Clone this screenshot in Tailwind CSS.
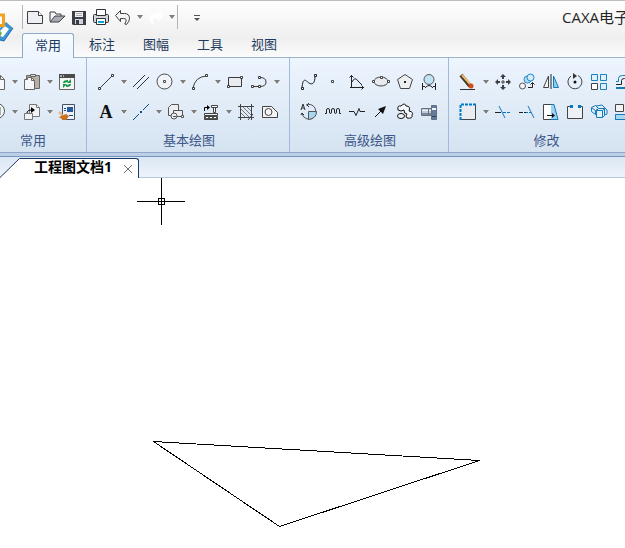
<!DOCTYPE html>
<html lang="zh-CN">
<head>
    <meta charset="UTF-8">
    <meta name="viewport" content="width=device-width, initial-scale=1.0">
    <title>CAXA电子</title>
    <script src="https://cdn.jsdelivr.net/npm/@tailwindcss/browser@4"></script>
</head>
<body class="flex h-screen flex-col overflow-hidden bg-white font-['Open_Sans','Noto_Sans_CJK_SC',sans-serif] text-[13px]">
    <!-- Shared drop-down arrow -->
    <svg class="hidden">
        <symbol id="drop" viewBox="0 0 11 24">
            <path d="M3 11h6l-3 4z" fill="#fff"/>
            <path d="M3 10h6l-3 4z" fill="#7d7d7d"/>
        </symbol>
    </svg>

    <header class="relative shrink-0 border-t border-[#bdbdbd] bg-linear-to-b from-white via-[#efefef] via-65% to-[#fcfcfc]">
        <!-- Application logo -->
        <svg class="absolute left-0 top-3 h-8 w-4" viewBox="0 0 16 32" aria-hidden="true">
            <path d="M6 9l7 6-9 13-4-1V15z" fill="#3e93d0"/>
            <path d="M13 15L4 28l-4-1" fill="none" stroke="#1c6cab"/>
            <path d="M5 13l4 3-6 8-3-1v-5z" fill="#fff"/>
            <path d="M0 18l2 2-2 4z" fill="#6ab33e"/>
            <path d="M0 2h3.500v10.500H0" fill="none" stroke="#f2a21d" stroke-width="3"/>
            <path d="M0 4h2v7H0z" fill="#fff"/>
        </svg>

        <div class="flex h-8 items-center pl-[22px]">
            <div class="flex items-center border-x border-[#b4b4b4] px-px">
                <button class="h-[15px] w-[22px]" aria-label="新建">
                    <svg class="-my-1 h-[22px] w-[22px]" viewBox="0 0 22 22" fill="none" stroke="#3c3e43">
                        <path d="M3.500 5.500h11l4 4v8h-15z" fill="#eeeff2"/><path d="M14.500 5.500v4h4" fill="#fff"/>
                    </svg>
                </button>
                <button class="h-[15px] w-[22px]" aria-label="打开">
                    <svg class="-my-1 h-[22px] w-[22px]" viewBox="0 0 22 22" fill="none" stroke="#3c3e43">
                        <path d="M4 15V6h5l1 2h5v2" fill="#f5f5f7"/><path d="M4 16l5-6h10l-6 6z" fill="#a9adb3"/>
                    </svg>
                </button>
                <button class="h-[15px] w-[22px]" aria-label="保存">
                    <svg class="-my-1 h-[22px] w-[22px]" viewBox="0 0 22 22">
                        <path d="M4 5h14v14H5l-1-1z" fill="#3a3d45"/><path d="M7 6h8v5H7z" fill="#f4f4f4"/><path d="M8 7.500h6M8 9.500h6" stroke="#aaa"/><path d="M7 13h8v5H7z" fill="#cfd2d8"/><path d="M8 14h3v4H8z" fill="#3a3d45"/>
                    </svg>
                </button>
                <button class="h-[15px] w-[22px]" aria-label="打印">
                    <svg class="-my-1 h-[22px] w-[22px]" viewBox="0 0 22 22" fill="none" stroke="#303238">
                        <rect x="3.500" y="8.500" width="15" height="8" rx="1" fill="#d4d6da"/><path d="M6.500 9.500v-6h9v6z" fill="#fff"/><path d="M6.500 12.500h9v6h-9z" fill="#fff"/><path d="M8 16h6" stroke="#00a7d9" stroke-width="2"/>
                    </svg>
                </button>
                <button class="h-[15px] w-[22px]" aria-label="撤销">
                    <svg class="-my-1 h-[22px] w-[22px]" viewBox="0 0 22 22" fill="#f4f4f4" stroke="#3c3e43">
                        <path d="M3.500 9.500l5-5v3h4q5 0 5 5 0 3-3 6-3 0-1-2 2-4-2-4h-3v3z"/>
                    </svg>
                </button>
                <button class="h-6 w-[11px]" aria-label="撤销列表"><svg class="h-6 w-[11px]"><use href="#drop"/></svg></button>
                <button class="h-[15px] w-[22px]" aria-label="恢复" disabled>
                    <svg class="-my-1 h-[22px] w-[22px]" viewBox="0 0 22 22" fill="#fff">
                        <path d="M18.500 9.500l-5-5v3h-4q-5 0-5 5 0 3 3 6 3 0 1-2-2-4 2-4h3v3z"/>
                    </svg>
                </button>
                <button class="h-6 w-[9px]" aria-label="恢复列表"><svg class="-ml-px h-6 w-[11px]"><use href="#drop"/></svg></button>
            </div>
            <button class="ml-3 h-6 w-4" aria-label="自定义快速启动工具栏">
                <svg class="h-6 w-4" viewBox="0 0 16 24"><path d="M4 10.500h6" stroke="#555"/><path d="M4 13h6l-3 3z" fill="#555"/></svg>
            </button>
            <h1 class="ml-auto w-[63px] overflow-hidden whitespace-nowrap text-[15px] text-[#262626]">CAXA电子</h1>
        </div>

        <nav class="flex gap-0.5 border-b border-[#9db3cd] pl-[22px] text-[#1e3a60]" role="tablist">
            <button class="-mb-px h-[25px] w-[52px] rounded-t-[3px] border border-b-0 border-[#8ea9ca] bg-linear-to-b from-[#f7fbff] to-[#edf5fe]" role="tab" aria-selected="true">常用</button>
            <button class="h-6 w-[52px]" role="tab">标注</button>
            <button class="h-6 w-[52px]" role="tab">图幅</button>
            <button class="h-6 w-[52px]" role="tab">工具</button>
            <button class="h-6 w-[52px]" role="tab">视图</button>
        </nav>
    </header>

    <div class="flex shrink-0 overflow-hidden border-b border-[#8ea7cb] bg-linear-to-b from-[#edf5fe] to-[#d5e3f1] text-[#3c5688]">
        <!-- 常用 -->
        <section class="-ml-[22px] flex shrink-0 flex-col items-center border-r border-[#a3b9d9] px-[7px] pt-[9px]">
            <div class="flex h-[30px] items-center">
                <button class="w-6" aria-label="复制">
                    <svg class="size-6" viewBox="0 0 24 24" fill="#f7f7f7" stroke="#666"><path d="M8.500 5.500h7l4 4v10h-11z"/><path d="M15.500 5.500v4h4" fill="none"/></svg>
                </button>
                <button class="w-[11px]" aria-label="复制选项"><svg class="h-6 w-[11px]"><use href="#drop"/></svg></button>
                <button class="w-6" aria-label="粘贴">
                    <svg class="size-6" viewBox="0 0 24 24" stroke="#666"><path d="M6.500 5.500h13v13h-13z" fill="#b8b0a5"/><path d="M10.500 4.500h5v2h-5z" fill="#ddd"/><path d="M4.500 9.500h3v-2h4l3 3v9h-10z" fill="#f6f7fa"/><path d="M11.500 7.500v3h3" fill="none"/></svg>
                </button>
                <button class="w-[11px]" aria-label="粘贴选项"><svg class="h-6 w-[11px]"><use href="#drop"/></svg></button>
                <button class="w-6" aria-label="刷新">
                    <svg class="size-6" viewBox="0 0 24 24" fill="none"><path d="M4.500 5.500h15v14h-15z" fill="#f5f5f5" stroke="#666"/><path d="M4 4h16v4H4z" fill="#4b4b4b"/><path d="M5 6h2M8 6h1" stroke="#fff"/><path d="M9 13q0-2 4-2M15 14q0 2-4 2" stroke="#139a48" stroke-width="2"/><path d="M12 13h4V9zM12 14H8v4z" fill="#139a48"/></svg>
                </button>
            </div>
            <div class="flex h-[30px] items-center">
                <button class="w-6" aria-label="图层">
                    <svg class="size-6" viewBox="0 0 24 24" fill="#f7f7f7" stroke="#555"><circle cx="12" cy="11" r="7.500"/><path d="M9 7h6v8H9z" fill="none" stroke="#387b65"/></svg>
                </button>
                <button class="w-[11px]" aria-label="图层选项"><svg class="h-6 w-[11px]"><use href="#drop"/></svg></button>
                <button class="w-6" aria-label="插入块">
                    <svg class="size-6" viewBox="0 0 24 24" fill="#f2f3f5" stroke="#777"><path d="M9.500 4.500h7l3 3v9h-10z"/><path d="M16.500 4.500v3h3M4.500 13.500h8v6h-8z"/><path d="M7 13q0-3 5-3" fill="none" stroke="#000"/><path d="M11 7l4 3-4 3z" fill="#000" stroke="none"/></svg>
                </button>
                <button class="w-[11px]" aria-label="插入块选项"><svg class="h-6 w-[11px]"><use href="#drop"/></svg></button>
                <button class="w-6" aria-label="特性匹配">
                    <svg class="size-6" viewBox="0 0 24 24"><path d="M7.500 4.500h12v15h-12z" fill="#eef2f8" stroke="#445263"/><path d="M12 7h6v5h-6z" fill="#24599f"/><path d="M9 8.500h2M9 10.500h2M14 15.500h4" stroke="#1d4d8b"/><path d="M4 12l4 4" stroke="#e6b47a" stroke-width="2"/><path d="M6 16l5-2 3 2-3 4H8l-4-3z" fill="#cc7120"/></svg>
                </button>
            </div>
            <h2 class="h-[25px] pl-0.5 leading-[27px]">常用</h2>
        </section>

        <!-- 基本绘图 -->
        <section class="flex shrink-0 flex-col items-center border-r border-[#a3b9d9] px-[7px] pt-[9px]">
            <div class="flex h-[30px] items-center">
                <button class="w-6" aria-label="直线">
                    <svg class="size-6" viewBox="0 0 24 24" fill="#fff" stroke="#3b3b3b"><path d="M6 18L18 6"/><path d="M4.500 17.500h2v2h-2zM17.500 4.500h2v2h-2z"/></svg>
                </button>
                <button class="w-[11px]" aria-label="直线选项"><svg class="h-6 w-[11px]"><use href="#drop"/></svg></button>
                <button class="w-6" aria-label="平行线">
                    <svg class="size-6" viewBox="0 0 24 24" stroke="#2f2f2f"><path d="M4 17L16 5M8 19L20 7"/></svg>
                </button>
                <button class="w-6" aria-label="圆">
                    <svg class="size-6" viewBox="0 0 24 24" fill="#f1f3f6" stroke="#4b4b4b"><circle cx="11.500" cy="11.500" r="7.500"/><path d="M10.500 10.500h2v2h-2z"/></svg>
                </button>
                <button class="w-[11px]" aria-label="圆选项"><svg class="h-6 w-[11px]"><use href="#drop"/></svg></button>
                <button class="w-6" aria-label="圆弧">
                    <svg class="size-6" viewBox="0 0 24 24" fill="none" stroke="#3b3b3b"><path d="M5 18Q7 7 18 6"/><path d="M4.500 17.500h2v2h-2zM17.500 4.500h2v2h-2z" fill="#fff"/></svg>
                </button>
                <button class="w-[11px]" aria-label="圆弧选项"><svg class="h-6 w-[11px]"><use href="#drop"/></svg></button>
                <button class="w-6" aria-label="矩形">
                    <svg class="size-6" viewBox="0 0 24 24" fill="#e9ebef" stroke="#3b3b3b"><path d="M5.500 7.500h13v9h-13z"/><path d="M4.500 15.500h2v2h-2zM17.500 6.500h2v2h-2z" fill="#fff"/></svg>
                </button>
                <button class="w-6" aria-label="多段线">
                    <svg class="size-6" viewBox="0 0 24 24" fill="none" stroke="#3b3b3b"><path d="M5 16.500h7M13 7.500q6 0 6 4.500t-6 4.500"/><path d="M4.500 15.500h2v2h-2zM11.500 15.500h2v2h-2zM11.500 6.500h2v2h-2z" fill="#fff"/></svg>
                </button>
                <button class="w-[11px]" aria-label="多段线选项"><svg class="h-6 w-[11px]"><use href="#drop"/></svg></button>
            </div>
            <div class="flex h-[30px] items-center">
                <button class="w-6 font-['Liberation_Serif',serif] text-[18px] font-bold leading-6 text-[#111]" aria-label="文字">A</button>
                <button class="w-[11px]" aria-label="文字选项"><svg class="h-6 w-[11px]"><use href="#drop"/></svg></button>
                <button class="w-6" aria-label="中心线">
                    <svg class="size-6" viewBox="0 0 24 24" stroke="#0e4b82"><path d="M4 20l6-6M14 10l6-6"/><path d="M11 12h2" stroke-width="2"/></svg>
                </button>
                <button class="w-[11px]" aria-label="中心线选项"><svg class="h-6 w-[11px]"><use href="#drop"/></svg></button>
                <button class="w-6" aria-label="图形">
                    <svg class="size-6" viewBox="0 0 24 24" fill="#eceef1" stroke="#555"><path d="M7.500 4.500h7v7h-3v4h-7v-8z"/><path d="M9.500 10.500h9v6h-9z"/><circle cx="10" cy="16" r="3"/><path d="M9 16.500h3" /><path d="M17.500 15.500h2v2h-2z" fill="#fff"/></svg>
                </button>
                <button class="w-[11px]" aria-label="图形选项"><svg class="h-6 w-[11px]"><use href="#drop"/></svg></button>
                <button class="w-6" aria-label="孔轴">
                    <svg class="size-6" viewBox="0 0 24 24" fill="none" stroke="#444"><path d="M5.500 11V7.500h3" stroke="#000"/><path d="M8 5l3 2.500L8 10z" fill="#000" stroke="none"/><path d="M12.500 5.500h6v2h-6zM14.500 7.500h2v5h-2z" fill="#fff"/><path d="M5.500 13.500h13v2h-13z" fill="#eee"/><path d="M5.500 16.500h13v3h-13z" fill="#555"/><path d="M7 17.500h2M11 17.500h2M15 17.500h2" stroke="#fff"/></svg>
                </button>
                <button class="w-[11px]" aria-label="孔轴选项"><svg class="h-6 w-[11px]"><use href="#drop"/></svg></button>
                <button class="w-6" aria-label="剖面线">
                    <svg class="size-6" viewBox="0 0 24 24" fill="none" stroke="#444"><path d="M6.500 4v16M17.500 4v16M4 6.500h16M4 17.500h16M19 14l-5 6"/><path d="M7 9l8 8M7 13l4 4M9 7l8 8M13 7l4 4" stroke="#777"/></svg>
                </button>
                <button class="w-6" aria-label="填充">
                    <svg class="size-6" viewBox="0 0 24 24" fill="#f4f5f6" stroke="#444"><path d="M4.500 6.500h9l6 6v5h-15z"/><circle cx="10.500" cy="12" r="3.500"/></svg>
                </button>
            </div>
            <h2 class="h-[25px] pl-0.5 leading-[27px]">基本绘图</h2>
        </section>

        <!-- 高级绘图 -->
        <section class="flex shrink-0 flex-col items-center border-r border-[#a3b9d9] px-[7px] pt-[9px]">
            <div class="flex h-[30px] items-center">
                <button class="w-6" aria-label="样条">
                    <svg class="size-6" viewBox="0 0 24 24" fill="none" stroke="#222"><path d="M5 18C6 6 9 11 12 13s6 1 6-7"/><path d="M4.500 17.500h2v2h-2zM17.500 4.500h2v2h-2z" fill="#fff"/></svg>
                </button>
                <button class="w-6" aria-label="点">
                    <svg class="size-6" viewBox="0 0 24 24"><path d="M10.500 10.500h2v2h-2z" fill="#fff" stroke="#444"/></svg>
                </button>
                <button class="w-6" aria-label="公式曲线">
                    <svg class="size-6" viewBox="0 0 24 24" fill="none" stroke="#222"><path d="M6.500 5v13M5 17.500h14M4.500 7.500l2-2 2 2M16.500 15.500l2 2-2 2M7 12q3-6 6-1l4 4"/></svg>
                </button>
                <button class="w-6" aria-label="椭圆">
                    <svg class="size-6" viewBox="0 0 24 24" fill="#e8eaee" stroke="#444"><ellipse cx="12" cy="11.500" rx="7" ry="4.500"/><path d="M3.500 10.500h2v2h-2zM18.500 10.500h2v2h-2zM11.500 6.500h2v2h-2z" fill="#fff"/></svg>
                </button>
                <button class="w-6" aria-label="正多边形">
                    <svg class="size-6" viewBox="0 0 24 24" fill="#eceef0" stroke="#444"><path d="M12 4.500l7.500 5-3 9h-9l-3-9z"/><path d="M11 11h2v2h-2z" fill="#222" stroke="none"/></svg>
                </button>
                <button class="w-6" aria-label="圆弧拟合">
                    <svg class="size-6" viewBox="0 0 24 24" fill="none" stroke="#222"><circle cx="12" cy="9.500" r="5" fill="#bfe2f5" stroke="#555"/><path d="M5.500 13v7M18.500 13v7M6 16.500h2M16 16.500h2M8 18q4-5 8 0"/></svg>
                </button>
            </div>
            <div class="flex h-[30px] items-center">
                <button class="w-6" aria-label="局部放大">
                    <svg class="size-6" viewBox="0 0 24 24" fill="none" stroke="#555"><path d="M9 5q6-2 9 3 2 4 0 8-3 4-8 3-5-2-5-6"/><path d="M11.500 11.500h8q0 7-8 8z" fill="#a8d5ef"/><path d="M4 10l2-6 2 6M5 8h2M12 3l-2 2 2 2M4 15l1-2 2 2" stroke="#333"/></svg>
                </button>
                <button class="w-6" aria-label="波浪线">
                    <svg class="size-6" viewBox="0 0 24 24" fill="none" stroke="#222"><path d="M4 13.500h1.500V10q0-1.500 1.500-1.500T8.500 10v2q0 1.500 1 1.500t1-1.500v-2q0-1.500 1.500-1.500t1.500 1.500v2q0 1.500 1 1.500t1-1.500v-2q0-1.500 1.500-1.500T18.500 10v3.500H20"/></svg>
                </button>
                <button class="w-6" aria-label="双折线">
                    <svg class="size-6" viewBox="0 0 24 24" fill="none" stroke="#222"><path d="M4 11.500h5l2 4 3-7 1 3h5"/></svg>
                </button>
                <button class="w-6" aria-label="箭头">
                    <svg class="size-6" viewBox="0 0 24 24"><path d="M6 17l6-6" stroke="#111"/><path d="M17 6l-3 8-5-5z" fill="#111"/></svg>
                </button>
                <button class="w-6" aria-label="云线">
                    <svg class="size-6" viewBox="0 0 24 24" fill="#f5f8fb" stroke="#111"><path d="M5 10Q4 5 8 6q4-4 5 0 5 0 3 5 5 1 3 4 1 4-5 3-2-2 0-4-3 0-3-4-3 2-6 0z"/><ellipse cx="8" cy="16" rx="3.500" ry="2.500"/></svg>
                </button>
                <button class="w-6" aria-label="齿轮轴">
                    <svg class="size-6" viewBox="0 0 24 24" stroke="#66717f"><path d="M4.500 8.500h10v7h-10z" fill="#c0cad7"/><path d="M14.500 5.500h5v14h-5z" fill="#647c9c"/><path d="M5 10.500h9M15 8.500h4M15 9.500h4" stroke="#eff5fa"/><path d="M5 14h9M15 16.500h4" stroke="#314865"/><path d="M11.500 8v8"/></svg>
                </button>
            </div>
            <h2 class="h-[25px] pl-0.5 leading-[27px]">高级绘图</h2>
        </section>

        <!-- 修改 -->
        <section class="flex shrink-0 flex-col items-center px-[7px] pt-[9px]">
            <div class="flex h-[30px] items-center">
                <button class="w-6" aria-label="删除">
                    <svg class="size-6" viewBox="0 0 24 24"><path d="M4 19.500h15" stroke="#333"/><path d="M5 5l9 11" stroke="#4a3a26" stroke-width="4"/><path d="M6 5l8 9" stroke="#e8bd71" stroke-width="2"/><circle cx="15" cy="16" r="2.500" fill="#d04b18"/></svg>
                </button>
                <button class="w-[11px]" aria-label="删除选项"><svg class="h-6 w-[11px]"><use href="#drop"/></svg></button>
                <button class="w-6" aria-label="平移">
                    <svg class="size-6" viewBox="0 0 24 24" fill="#3d4045"><path d="M12 4l3 3h-2v2h-2V7H9zM12 20l3-3h-2v-2h-2v2H9zM4 12l3-3v2h2v2H7v2zM20 12l-3-3v2h-2v2h2v2z"/><path d="M11 11h2v2h-2z" fill="#fff" stroke="#3d4045"/></svg>
                </button>
                <button class="w-6" aria-label="平移复制">
                    <svg class="size-6" viewBox="0 0 24 24" fill="none"><circle cx="7.500" cy="16" r="3" fill="#f4f5f6" stroke="#555"/><circle cx="12.500" cy="9.500" r="3.500" fill="#b5dcf2" stroke="#2388c5"/><circle cx="15.500" cy="7.500" r="3.500" fill="#d2ecf9" stroke="#2388c5"/><path d="M13 17.500h4.500V13M15.500 14.500l2-2 2 2" stroke="#222"/></svg>
                </button>
                <button class="w-6" aria-label="镜像">
                    <svg class="size-6" viewBox="0 0 24 24"><path d="M9.500 6v11.500h-5z" fill="#f5f5f5" stroke="#444"/><path d="M12 4v15" stroke="#222"/><path d="M14.500 6v11.500h5z" fill="#91cdee" stroke="#147ab9"/></svg>
                </button>
                <button class="w-6" aria-label="旋转">
                    <svg class="size-6" viewBox="0 0 24 24" fill="none"><path d="M8 6A7 7 0 1 0 15 5.500" stroke="#444" stroke-width="1"/><path d="M10 3l4 3-4 3z" fill="#333"/><circle cx="12" cy="12" r="1.500" fill="#111"/></svg>
                </button>
                <button class="w-6" aria-label="阵列">
                    <svg class="size-6" viewBox="0 0 24 24" fill="#dff0fa" stroke="#1982c2"><path d="M4.500 4.500h6v6h-6zM13.500 4.500h6v6h-6zM13.500 13.500h6v6h-6z"/><path d="M4.500 13.500h6v6h-6z" fill="#fff" stroke="#444"/></svg>
                </button>
                <button class="w-6" aria-label="等距线">
                    <svg class="size-6" viewBox="0 0 24 24" fill="none"><path d="M5 11.500h2.500V8.500q0-3 4-3h8" stroke="#147ab9"/><path d="M5 14.500h5.500v-4q0-2 3-2h6" stroke="#222"/><path d="M5 18h15" stroke="#147ab9" stroke-width="2"/></svg>
                </button>
            </div>
            <div class="flex h-[30px] items-center">
                <button class="w-6" aria-label="裁剪">
                    <svg class="size-6" viewBox="0 0 24 24" fill="#e9edf2"><path d="M4.500 4.500h15v15h-15z" stroke="#444"/><path d="M4.500 19V4.500H19" fill="none" stroke="#e4f2fb" stroke-width="2"/><path d="M4.500 20V4.500H20" fill="none" stroke="#0079c8" stroke-width="2" stroke-dasharray="3 1"/></svg>
                </button>
                <button class="w-[11px]" aria-label="裁剪选项"><svg class="h-6 w-[11px]"><use href="#drop"/></svg></button>
                <button class="w-6" aria-label="修剪">
                    <svg class="size-6" viewBox="0 0 24 24"><path d="M4 12.500h6" stroke="#222"/><path d="M8 6l6 12" stroke="#147ab9"/><path d="M12 12.500h8" stroke="#0079c8" stroke-dasharray="3 1"/></svg>
                </button>
                <button class="w-6" aria-label="延伸">
                    <svg class="size-6" viewBox="0 0 24 24"><path d="M4 12.500h8" stroke="#222" stroke-dasharray="4 1"/><path d="M11 12.500h5" stroke="#0079c8" stroke-dasharray="2 1"/><path d="M13 6l6 12" stroke="#147ab9"/></svg>
                </button>
                <button class="w-6" aria-label="拉伸">
                    <svg class="size-6" viewBox="0 0 24 24"><path d="M4.500 4.500h8v15h-8z" fill="#fff" stroke="#444"/><path d="M12 4.500h3l4 15h-7z" fill="#9dd2ef"/><path d="M12 4.500h3l4 15h-7" fill="none" stroke="#147ab9"/><path d="M8 15.500h5" stroke="#111"/><path d="M13 13l3 2.500-3 2.500z" fill="#111"/></svg>
                </button>
                <button class="w-6" aria-label="打断">
                    <svg class="size-6" viewBox="0 0 24 24"><path d="M9 6.500H4.500v12h15v-12H15" fill="#edf1f5" stroke="#444"/><path d="M7 5h3v3H7zM15 5h3v3h-3z" fill="#0079c8"/></svg>
                </button>
                <button class="w-6" aria-label="缩放">
                    <svg class="size-6" viewBox="0 0 24 24" fill="none" stroke="#147ab9"><path d="M4.500 7.500l4-2 3 3v5l-3 1-4-3zM4.500 7.500l4 3 3-2M8.500 10.500v4M9 6l6-1 5 5v4l-3 1"/><path d="M9.500 10.500l2-2h6v7l-2 2h-6z" fill="#dff1fb"/><path d="M9.500 10.500h6v7M15.500 10.500l2-2"/></svg>
                </button>
                <button class="w-6" aria-label="分解">
                    <svg class="size-6" viewBox="0 0 24 24"><path d="M4 14h16v5H4z" fill="#a9d7f0"/><path d="M4.500 19V14.500H20M4 19.500h16" fill="none" stroke="#147ab9"/><path d="M4.500 4.500h8v7h-8z" fill="#f4f4f4" stroke="#444"/></svg>
                </button>
            </div>
            <h2 class="h-[25px] pl-0.5 leading-[27px]">修改</h2>
        </section>
    </div>

    <!-- Document tabs -->
    <div class="shrink-0 border-b border-[#b3c9df] bg-linear-to-b from-[#d8e4f2] to-[#edf3fa]">
        <div class="h-1 border-b border-[#7494bb] bg-[#bccfe6]"></div>
        <div class="-mb-px flex pt-px">
            <svg class="h-5 w-5" viewBox="0 0 20 20" aria-hidden="true">
                <path d="M0 20L20 0v20z" fill="#fff"/><path d="M0 19.500L19.500 .500H20" fill="none" stroke="#1b3b6b"/>
            </svg>
            <div class="flex h-5 w-[119px] items-start rounded-tr-[3px] border-r border-t border-[#1b3b6b] bg-white pl-3.5 pr-1.5">
                <a href="#drawing" class="whitespace-nowrap text-[14px] font-bold leading-4 text-black">工程图文档1</a>
                <button class="ml-auto pt-1.5" aria-label="关闭">
                    <svg class="size-2" viewBox="0 0 8 8"><path d="M0 0l8 8M8 0l-8 8" stroke="#6d6d6d" stroke-width="1"/></svg>
                </button>
            </div>
        </div>
    </div>

    <main id="drawing" class="min-h-0 flex-1 bg-white">
        <svg class="size-full" fill="none" stroke="#000" shape-rendering="crispEdges">
            <path d="M161.500 0v20M161.500 27v20M137 23.500h21M165 23.500h20M158.500 20.500h6v6h-6zM161.500 20v7M158 23.500h7"/>
            <path d="M153.500 263.500L479.500 282.500L279.500 348.500z"/>
        </svg>
    </main>
</body>
</html>
